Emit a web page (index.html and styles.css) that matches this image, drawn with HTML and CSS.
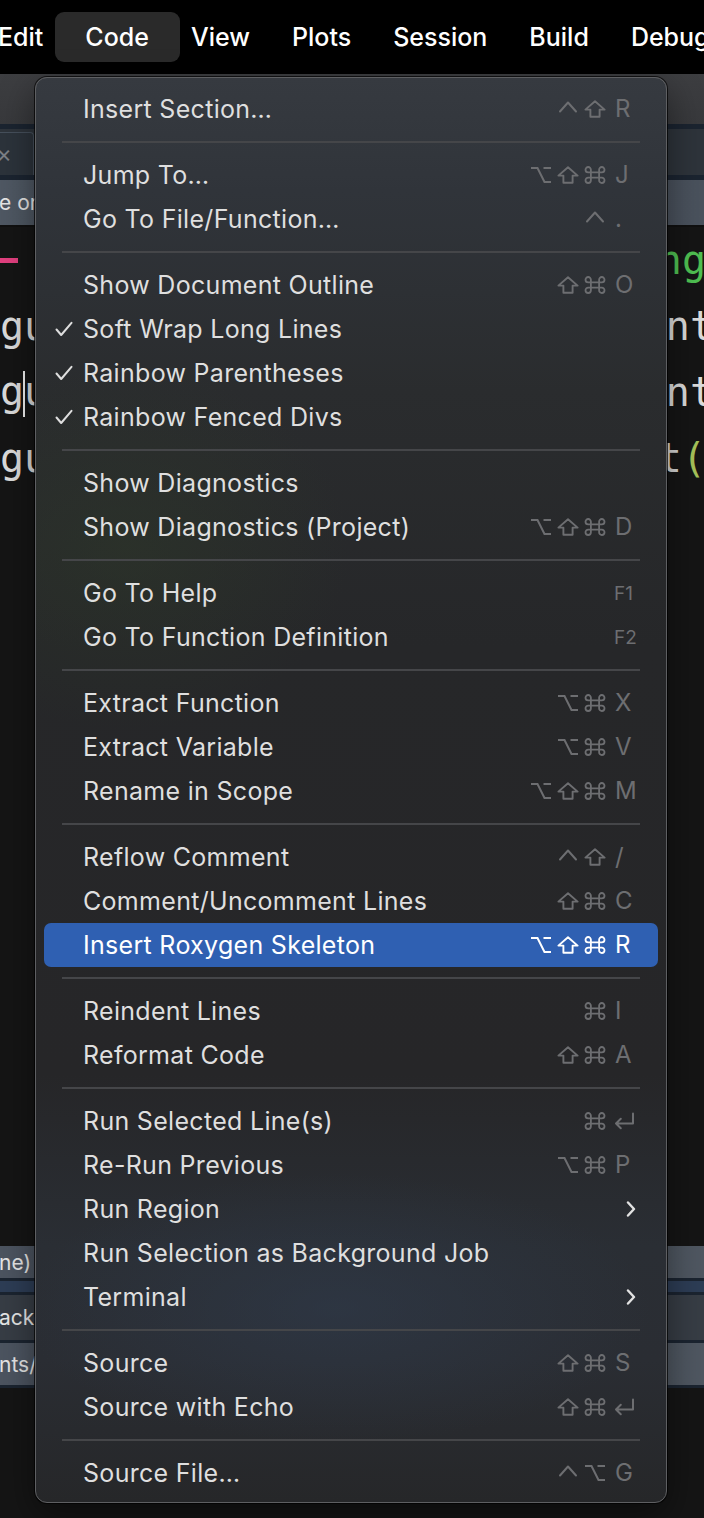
FILE: index.html
```html
<!DOCTYPE html>
<html lang="en">
<head>
<meta charset="utf-8">
<title>Code menu</title>
<link rel="stylesheet" href="styles.css">
</head>
<body>
<svg class="defs" width="0" height="0" aria-hidden="true">
  <symbol id="i-ctrl" viewBox="0 0 22 18"><path d="M3 11.5 L11 2.5 L19 11.5" fill="none" stroke="currentColor" stroke-width="2" stroke-linecap="round" stroke-linejoin="round"/></symbol>
  <symbol id="i-shift" viewBox="0 0 22 18"><path d="M11 1.2 L20.6 9.6 H15.6 V16.8 H6.4 V9.6 H1.4 Z" fill="none" stroke="currentColor" stroke-width="1.9" stroke-linejoin="round"/></symbol>
  <symbol id="i-cmd" viewBox="0 0 22 18"><path d="M6.9 6.4 V3.7 A2.7 2.7 0 1 0 4.2 6.4 H17.8 A2.7 2.7 0 1 0 15.1 3.7 V14.3 A2.7 2.7 0 1 0 17.8 11.6 H4.2 A2.7 2.7 0 1 0 6.9 14.3 Z" fill="none" stroke="currentColor" stroke-width="1.8" stroke-linejoin="round"/></symbol>
  <symbol id="i-opt" viewBox="0 0 22 18"><path d="M1 2 H7.5 L14.5 16 H21 M13.5 2 H21" fill="none" stroke="currentColor" stroke-width="2"/></symbol>
  <symbol id="i-ret" viewBox="0 0 22 18"><path d="M20 1.5 V11.5 H3 M7.8 6.7 L3 11.5 L7.8 16.3" fill="none" stroke="currentColor" stroke-width="2" stroke-linejoin="round" stroke-linecap="round"/></symbol>
  <symbol id="i-check" viewBox="0 0 18 16"><path d="M1.5 8.5 L6.2 14 L16.5 1.8" fill="none" stroke="currentColor" stroke-width="2" stroke-linecap="round" stroke-linejoin="round"/></symbol>
  <symbol id="i-sub" viewBox="0 0 10 16"><path d="M2 1.5 L8 8 L2 14.5" fill="none" stroke="currentColor" stroke-width="2.4" stroke-linecap="round" stroke-linejoin="round"/></symbol>
</svg>

<div class="screen">
  <header class="menubar">
    <span class="mb-item first">Edit</span>
    <span class="mb-item active">Code</span>
    <span class="mb-item">View</span>
    <span class="mb-item">Plots</span>
    <span class="mb-item">Session</span>
    <span class="mb-item">Build</span>
    <span class="mb-item">Debug</span>
  </header>
  <div class="toolbar"></div>
  <div class="rule navy"></div>
  <div class="tabs"><span class="tab"><span class="tab-x">×</span></span></div>
  <div class="rule navy"></div>
  <div class="pathbar"><span class="bar-text">e or</span></div>
  <div class="rule dark"></div>
  <div class="editor">
    <div class="code-line"><span class="dash"></span><span class="right green">ng</span></div>
    <div class="code-line"><span class="left">gu</span><span class="right cut">nt</span></div>
    <div class="code-line"><span class="left">g<span class="cursor"></span>u</span><span class="right cut">nt</span></div>
    <div class="code-line"><span class="left">gu</span><span class="right"><span class="dim">t</span><span class="paren">(</span></span></div>
  </div>
  <div class="fill"></div>
  <div class="bar light short"><span class="bar-text">ne)</span></div>
  <div class="rule navy thin"></div>
  <div class="bar navyband"></div>
  <div class="rule navy thin"></div>
  <div class="bar mid"><span class="bar-text">ackg</span></div>
  <div class="rule navy thin"></div>
  <div class="bar light"><span class="bar-text">nts/</span></div>
  <div class="rule navy thin"></div>
  <div class="editor-bottom"><span class="yellow">-';</span></div>
</div>

<nav class="menu">
  <div class="item"><span class="chk"></span><span class="label">Insert Section…</span><span class="keys"><span class="mods"><svg><use href="#i-ctrl"/></svg><svg><use href="#i-shift"/></svg></span><span class="key">R</span></span></div>
  <div class="sep"></div>
  <div class="item"><span class="chk"></span><span class="label">Jump To…</span><span class="keys"><span class="mods"><svg><use href="#i-opt"/></svg><svg><use href="#i-shift"/></svg><svg><use href="#i-cmd"/></svg></span><span class="key">J</span></span></div>
  <div class="item"><span class="chk"></span><span class="label">Go To File/Function…</span><span class="keys"><span class="mods"><svg><use href="#i-ctrl"/></svg></span><span class="key">.</span></span></div>
  <div class="sep"></div>
  <div class="item"><span class="chk"></span><span class="label">Show Document Outline</span><span class="keys"><span class="mods"><svg><use href="#i-shift"/></svg><svg><use href="#i-cmd"/></svg></span><span class="key">O</span></span></div>
  <div class="item"><span class="chk"><svg><use href="#i-check"/></svg></span><span class="label">Soft Wrap Long Lines</span><span class="keys"></span></div>
  <div class="item"><span class="chk"><svg><use href="#i-check"/></svg></span><span class="label">Rainbow Parentheses</span><span class="keys"></span></div>
  <div class="item"><span class="chk"><svg><use href="#i-check"/></svg></span><span class="label">Rainbow Fenced Divs</span><span class="keys"></span></div>
  <div class="sep"></div>
  <div class="item"><span class="chk"></span><span class="label">Show Diagnostics</span><span class="keys"></span></div>
  <div class="item"><span class="chk"></span><span class="label">Show Diagnostics (Project)</span><span class="keys"><span class="mods"><svg><use href="#i-opt"/></svg><svg><use href="#i-shift"/></svg><svg><use href="#i-cmd"/></svg></span><span class="key">D</span></span></div>
  <div class="sep"></div>
  <div class="item"><span class="chk"></span><span class="label">Go To Help</span><span class="keys"><span class="key fn">F1</span></span></div>
  <div class="item"><span class="chk"></span><span class="label">Go To Function Definition</span><span class="keys"><span class="key fn">F2</span></span></div>
  <div class="sep"></div>
  <div class="item"><span class="chk"></span><span class="label">Extract Function</span><span class="keys"><span class="mods"><svg><use href="#i-opt"/></svg><svg><use href="#i-cmd"/></svg></span><span class="key">X</span></span></div>
  <div class="item"><span class="chk"></span><span class="label">Extract Variable</span><span class="keys"><span class="mods"><svg><use href="#i-opt"/></svg><svg><use href="#i-cmd"/></svg></span><span class="key">V</span></span></div>
  <div class="item"><span class="chk"></span><span class="label">Rename in Scope</span><span class="keys"><span class="mods"><svg><use href="#i-opt"/></svg><svg><use href="#i-shift"/></svg><svg><use href="#i-cmd"/></svg></span><span class="key">M</span></span></div>
  <div class="sep"></div>
  <div class="item"><span class="chk"></span><span class="label">Reflow Comment</span><span class="keys"><span class="mods"><svg><use href="#i-ctrl"/></svg><svg><use href="#i-shift"/></svg></span><span class="key">/</span></span></div>
  <div class="item"><span class="chk"></span><span class="label">Comment/Uncomment Lines</span><span class="keys"><span class="mods"><svg><use href="#i-shift"/></svg><svg><use href="#i-cmd"/></svg></span><span class="key">C</span></span></div>
  <div class="item selected"><span class="chk"></span><span class="label">Insert Roxygen Skeleton</span><span class="keys"><span class="mods"><svg><use href="#i-opt"/></svg><svg><use href="#i-shift"/></svg><svg><use href="#i-cmd"/></svg></span><span class="key">R</span></span></div>
  <div class="sep"></div>
  <div class="item"><span class="chk"></span><span class="label">Reindent Lines</span><span class="keys"><span class="mods"><svg><use href="#i-cmd"/></svg></span><span class="key">I</span></span></div>
  <div class="item"><span class="chk"></span><span class="label">Reformat Code</span><span class="keys"><span class="mods"><svg><use href="#i-shift"/></svg><svg><use href="#i-cmd"/></svg></span><span class="key">A</span></span></div>
  <div class="sep"></div>
  <div class="item"><span class="chk"></span><span class="label">Run Selected Line(s)</span><span class="keys"><span class="mods"><svg><use href="#i-cmd"/></svg></span><span class="key"><svg class="ret"><use href="#i-ret"/></svg></span></span></div>
  <div class="item"><span class="chk"></span><span class="label">Re-Run Previous</span><span class="keys"><span class="mods"><svg><use href="#i-opt"/></svg><svg><use href="#i-cmd"/></svg></span><span class="key">P</span></span></div>
  <div class="item"><span class="chk"></span><span class="label">Run Region</span><span class="keys"><span class="key sub"><svg><use href="#i-sub"/></svg></span></span></div>
  <div class="item"><span class="chk"></span><span class="label">Run Selection as Background Job</span><span class="keys"></span></div>
  <div class="item"><span class="chk"></span><span class="label">Terminal</span><span class="keys"><span class="key sub"><svg><use href="#i-sub"/></svg></span></span></div>
  <div class="sep"></div>
  <div class="item"><span class="chk"></span><span class="label">Source</span><span class="keys"><span class="mods"><svg><use href="#i-shift"/></svg><svg><use href="#i-cmd"/></svg></span><span class="key">S</span></span></div>
  <div class="item"><span class="chk"></span><span class="label">Source with Echo</span><span class="keys"><span class="mods"><svg><use href="#i-shift"/></svg><svg><use href="#i-cmd"/></svg></span><span class="key"><svg class="ret"><use href="#i-ret"/></svg></span></span></div>
  <div class="sep"></div>
  <div class="item"><span class="chk"></span><span class="label">Source File…</span><span class="keys"><span class="mods"><svg><use href="#i-ctrl"/></svg><svg><use href="#i-opt"/></svg></span><span class="key">G</span></span></div>
</nav>
</body>
</html>
```

FILE: styles.css
```css
html, body {
  margin: 0;
  padding: 0;
}

body {
  width: 704px;
  height: 1518px;
  overflow: hidden;
  position: relative;
  background: #151515;
  font-family: Inter, "Noto Sans", "Liberation Sans", sans-serif;
}

.defs {
  position: absolute;
  width: 0;
  height: 0;
}

.screen {
  display: flex;
  flex-direction: column;
  height: 1518px;
}

/* ---------- top menu bar ---------- */
.menubar {
  flex: 0 0 74px;
  background: #000;
  display: flex;
  align-items: center;
  color: #fff;
  font-size: 25px;
  font-weight: 500;
  white-space: nowrap;
  overflow: hidden;
}

.mb-item {
  padding: 0 21px;
  line-height: 50px;
}

.mb-item.first {
  margin-left: -23px;
}

.mb-item.active {
  background: #2a2a2a;
  border-radius: 9px;
  padding: 0 31px 0 30px;
  margin: 0 -10px 0 -9px;
}

/* ---------- background IDE chrome ---------- */
.toolbar {
  flex: 0 0 50px;
  background: linear-gradient(#3d3e41, #38393c);
}

.rule {
  flex: 0 0 5px;
}

.rule.navy {
  background: #1b2430;
}

.rule.thin {
  flex-basis: 3px;
}

.rule.dark {
  flex: 0 0 2px;
  background: #101010;
}

.tabs {
  flex: 0 0 46px;
  background: #2e343b;
  display: flex;
  align-items: stretch;
  overflow: hidden;
}

.tab {
  margin: 3px 0 0 -40px;
  width: 74px;
  box-sizing: border-box;
  border: 1px solid #46505c;
  border-bottom: none;
  border-radius: 4px 4px 0 0;
  background: #2c333b;
  display: flex;
  align-items: center;
  justify-content: flex-end;
  padding-right: 21px;
}

.tab-x {
  color: #7d8086;
  font-size: 24px;
  line-height: 1;
}

.pathbar {
  flex: 0 0 45px;
  background: linear-gradient(90deg, #4f5863, #4a525d);
  display: flex;
  align-items: center;
  overflow: hidden;
}

.bar-text {
  color: #e6e6e6;
  font-size: 21px;
  white-space: nowrap;
  margin-left: -1px;
}

.editor {
  display: flex;
  flex-direction: column;
  background: #151515;
}

.code-line {
  height: 66px;
  display: flex;
  align-items: center;
  justify-content: space-between;
  font-family: "DejaVu Sans Mono", "Liberation Mono", monospace;
  font-size: 40px;
  color: #dcdcdc;
  overflow: hidden;
  white-space: nowrap;
}

.dash {
  width: 18px;
  height: 5px;
  background: #e2407f;
}

.left {
  position: relative;
}

.cursor {
  display: inline-block;
  width: 2px;
  height: 46px;
  background: #f0f0f0;
  vertical-align: -12px;
  margin: 0 -1px;
}

.right {
  margin-right: -2px;
}

.right.cut {
  margin-right: -10px;
}

.green {
  color: #4fc052;
}

.dim {
  color: #d6d6d6;
}

.paren {
  color: #a6c25a;
}

.fill {
  flex: 1 1 auto;
  background: #151515;
}

.bar {
  display: flex;
  align-items: center;
  overflow: hidden;
}

.bar.light {
  flex: 0 0 42px;
  background: linear-gradient(90deg, #4c5460, #4f5761);
}

.bar.light.short {
  flex-basis: 32px;
}

.bar.navyband {
  flex: 0 0 11px;
  background: #2d3d55;
}

.bar.mid {
  flex: 0 0 45px;
  background: #373d45;
}

.editor-bottom {
  flex: 0 0 130px;
  background: #151515;
  overflow: hidden;
  font-family: "DejaVu Sans Mono", monospace;
  font-size: 40px;
  line-height: 40px;
}

.yellow {
  display: block;
  margin-top: -28px;
  color: #e2a63a;
}

/* ---------- dropdown menu ---------- */
.menu {
  position: absolute;
  left: 35px;
  top: 77px;
  width: 632px;
  box-sizing: border-box;
  padding: 9px 8px 7px;
  border: 1px solid #5e5f62;
  border-radius: 12px;
  background:
    radial-gradient(ellipse 320px 260px at 90px 470px, rgba(46, 58, 40, 0.45), rgba(46, 58, 40, 0) 70%),
    radial-gradient(ellipse 420px 180px at 300px 1230px, rgba(48, 60, 78, 0.55), rgba(48, 60, 78, 0) 75%),
    linear-gradient(180deg, #363a40 0%, #30343a 8%, #2a2c2e 22%, #262729 40%, #262628 70%, #2a2e34 82%, #2a2d33 90%, #262729 100%);
  box-shadow: 0 0 0 1px rgba(0, 0, 0, 0.7), 0 12px 36px rgba(0, 0, 0, 0.45);
  color: #dfdfdf;
  font-size: 25px;
  letter-spacing: 0.3px;
}

.item {
  display: grid;
  grid-template-columns: 39px 1fr auto;
  align-items: center;
  height: 44px;
  padding-right: 17px;
  border-radius: 7px;
  white-space: nowrap;
}

.item.selected {
  background: #2f60b2;
  color: #fff;
}

.sep {
  height: 2px;
  margin: 10px 18px;
  background: #454649;
}

.chk {
  display: flex;
  align-items: center;
  padding-left: 11px;
  color: #dedede;
}

.chk svg {
  width: 18px;
  height: 16px;
}

.label {
  line-height: 44px;
}

.keys {
  display: flex;
  align-items: center;
  color: #6d6e71;
  letter-spacing: 0;
  font-size: 24px;
}

.item.selected .keys {
  color: #fff;
}

.mods {
  display: flex;
  gap: 5px;
}

.mods svg {
  width: 22px;
  height: 18px;
  display: block;
}

.key {
  width: 26px;
  margin-left: 9px;
  line-height: 1;
  display: flex;
  align-items: center;
}

.key.fn {
  font-size: 19px;
  width: 27px;
  margin-left: 0;
}

.key .ret {
  width: 22px;
  height: 18px;
  margin-left: -2px;
  display: block;
}

.key.sub {
  color: #e2e2e2;
  justify-content: flex-start;
  padding-left: 11px;
  width: 15px;
}

.key.sub svg {
  width: 10px;
  height: 16px;
  display: block;
}
```
